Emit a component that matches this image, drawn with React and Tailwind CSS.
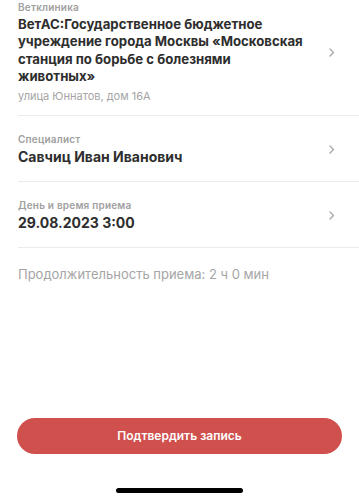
const ROWS = [
  { label: 'Специалист', value: 'Савчиц Иван Иванович' },
  { label: 'День и время приема', value: '29.08.2023 3:00' },
]

function Chevron() {
  return (
    <svg width="6" height="9" viewBox="0 0 6 9" className="shrink-0">
      <path d="M1 1l3.5 3.5L1 8" fill="none" stroke="#a8a8a8" strokeWidth="1.4" strokeLinecap="round" strokeLinejoin="round" />
    </svg>
  )
}

export default function App() {
  return (
    <div className="w-[359px] h-[500px] bg-white flex flex-col" style={{ fontFamily: 'Inter, "Noto Sans", sans-serif' }}>
      <div className="pl-[18px]">
        {/* Clinic */}
        <div className="flex items-center border-b border-[#ebebeb] pr-[24px] pt-[1px] pb-[12px]">
          <div className="flex-1 min-w-0">
            <p className="text-[10px] leading-[12px] font-semibold tracking-[0.2px] text-[#a0a0a0]">Ветклиника</p>
            <p className="mt-[3px] w-[290px] text-[13.2px] leading-[17.3px] font-bold text-[#2e2e2e]">
              ВетАС:Государственное бюджетное учреждение города Москвы «Московская станция по борьбе с болезнями животных»
            </p>
            <p className="mt-[4px] text-[11px] leading-[14px] text-[#a5a5a5]">улица Юннатов, дом 16А</p>
          </div>
          <Chevron />
        </div>

        {ROWS.map((row) => (
          <div key={row.label} className="flex items-center border-b border-[#ebebeb] pr-[24px] pt-[17px] pb-[15px]">
            <div className="flex-1 min-w-0">
              <p className="text-[10px] leading-[12px] font-semibold tracking-[0.2px] text-[#a0a0a0]">{row.label}</p>
              <p className="mt-[3px] text-[14px] leading-[18px] font-bold text-[#2e2e2e]">{row.value}</p>
            </div>
            <Chevron />
          </div>
        ))}

        <p className="mt-[18px] text-[13px] leading-[16px] text-[#a5a5a5]">Продолжительность приема: 2 ч 0 мин</p>
      </div>

      <div className="mt-auto px-[17px] pb-[34px]">
        <button className="w-full h-[36px] rounded-full bg-[#d0504d] text-white text-[12px] font-semibold">
          Подтвердить запись
        </button>
      </div>
      <div className="pb-[7px] flex justify-center">
        <div className="w-[127px] h-[5px] rounded-full bg-black" />
      </div>
    </div>
  )
}
